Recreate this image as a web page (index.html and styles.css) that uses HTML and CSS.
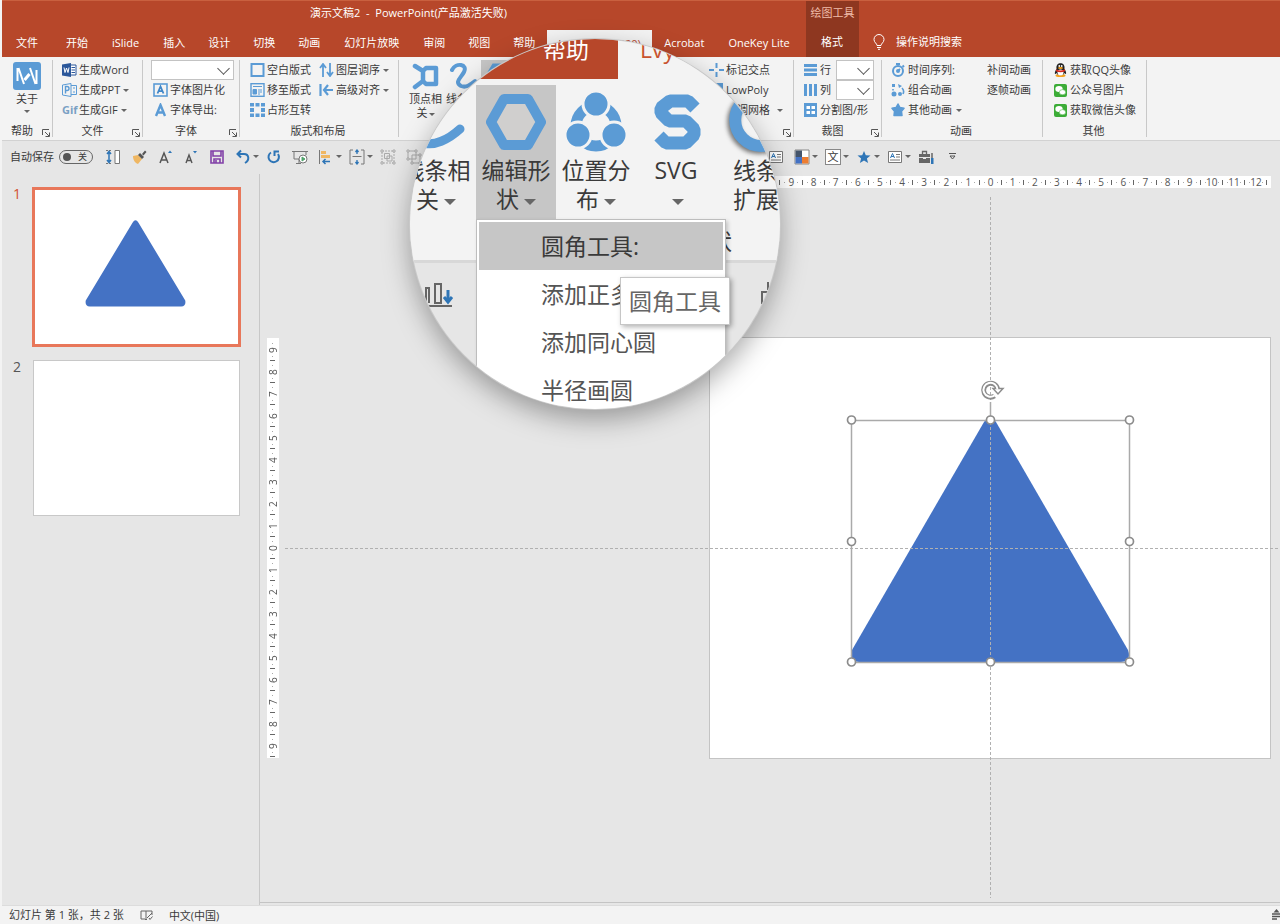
FILE: index.html
```html
<!DOCTYPE html>
<html lang="zh-CN">
<head>
<meta charset="utf-8">
<meta name="viewport" content="width=device-width, initial-scale=1">
<title>演示文稿2 - PowerPoint</title>
<link rel="stylesheet" href="styles.css">
</head>
<body>
<div class="app">
  <header class="header">
    <div class="title">演示文稿2&nbsp; -&nbsp; PowerPoint(产品激活失败)</div>
    <nav class="tabs">
      <button class="tab tab-file">文件</button>
      <button class="tab">开始</button>
      <button class="tab tab-wide">iSlide</button>
      <button class="tab">插入</button>
      <button class="tab">设计</button>
      <button class="tab">切换</button>
      <button class="tab">动画</button>
      <button class="tab tab-wide">幻灯片放映</button>
      <button class="tab">审阅</button>
      <button class="tab">视图</button>
      <button class="tab">帮助</button>
      <button class="tab tab-active">LvyhTools(2420)</button>
      <button class="tab tab-wide">Acrobat</button>
      <button class="tab">OneKey Lite</button>
    </nav>
    <div class="context">
      <span class="context-name">绘图工具</span>
      <button class="tab context-tab">格式</button>
    </div>
    <button class="tell-me">
      <svg width="12" height="16" viewBox="0 0 12 16" fill="none" stroke="#fff"><path d="M4 11.5C4 9.500 1 8.500 1 5.500a5 5 0 0 1 10 0c0 3-3 4-3 6zM4 13.500h4M5 15.300h2"/></svg>
      操作说明搜索
    </button>
  </header>

  <section class="ribbon">
    <div class="group">
      <div class="group-body">
        <button class="big">
          <svg width="28" height="28" viewBox="0 0 28 28"><rect width="28" height="28" rx="3" fill="#5b9bd5"/><path d="M4.500 6v13M5.500 6l5.500 16M17 6l5.500 16M23.500 8v14" fill="none" stroke="#fff" stroke-width="2"/><path d="M11.500 18l5-6" fill="none" stroke="#fff" stroke-width="3"/></svg>
          <span>关于</span><i class="caret"></i>
        </button>
      </div>
      <div class="group-foot"><span>帮助</span><button class="launcher" aria-label="帮助选项"><svg width="8" height="8" viewBox="0 0 8 8"><path d="M.5 6V.5H7M3 3l4 4M7.500 3.500v4h-4" fill="none" stroke="#555"/></svg></button></div>
    </div>

    <div class="group">
      <div class="group-body pad-file">
        <div class="stack">
          <button class="item"><svg width="15" height="14" viewBox="0 0 15 14"><path d="M8 2h6v10H8M9.500 4.500H13M9.500 7H13M9.500 9.500H13" fill="#fff" stroke="#2b579a"/><path d="M0 1.500 9 0v14l-9-1.500z" fill="#2b579a"/><path d="m2 4.500 1 5 1.500-4.500L6 9.500l1-5" fill="none" stroke="#fff"/></svg>生成Word</button>
          <button class="item"><svg width="15" height="14" viewBox="0 0 15 14" fill="none" stroke="#5b9bd5"><path d="M.5 2 9 .5v13L.5 12zM9 2.500h5.500v9H9M11 5h2M11 9h2"/><path d="M3.500 10.500v-7h1.500a2 2 0 0 1 0 4H3.500" stroke-width="1.400"/></svg>生成PPT<i class="caret"></i></button>
          <button class="item"><b class="gif">Gif</b>生成GIF<i class="caret"></i></button>
        </div>
      </div>
      <div class="group-foot"><span>文件</span><button class="launcher" aria-label="文件选项"><svg width="8" height="8" viewBox="0 0 8 8"><path d="M.5 6V.5H7M3 3l4 4M7.500 3.500v4h-4" fill="none" stroke="#555"/></svg></button></div>
    </div>

    <div class="group">
      <div class="group-body pad-font">
        <div class="stack">
          <label class="pick"><select aria-label="字体"><option></option></select></label>
          <button class="item"><svg width="15" height="14" viewBox="0 0 15 14" fill="none" stroke="#5b9bd5"><rect x="1" y="1" width="13" height="12" stroke-width="1.600"/><path d="m4.500 10.500 3-7 3 7M5.500 8.200h4" stroke="#3f86c8" stroke-width="1.800"/></svg>字体图片化</button>
          <button class="item"><svg width="15" height="14" viewBox="0 0 15 14" fill="none" stroke="#5b9bd5" stroke-width="2.400"><path d="m3 13 4.500-11L12 13M4.500 9.500h6"/></svg>字体导出:</button>
        </div>
      </div>
      <div class="group-foot"><span>字体</span><button class="launcher" aria-label="字体选项"><svg width="8" height="8" viewBox="0 0 8 8"><path d="M.5 6V.5H7M3 3l4 4M7.500 3.500v4h-4" fill="none" stroke="#555"/></svg></button></div>
    </div>

    <div class="group">
      <div class="group-body pad-layout">
        <div class="stack">
          <button class="item"><svg width="15" height="14" viewBox="0 0 15 14"><rect x="1.500" y="1" width="12" height="12" fill="none" stroke="#5b9bd5" stroke-width="2"/></svg>空白版式</button>
          <button class="item"><svg width="15" height="14" viewBox="0 0 15 14" fill="none" stroke="#5b9bd5"><rect x="1" y=".7" width="13" height="12.600" stroke-width="1.400"/><path d="M3 3.500h9M8 7h4M8 9h4M8 11h2"/><path d="M3 6.500h3.500V11H3z" fill="#5b9bd5"/></svg>移至版式</button>
          <button class="item"><svg width="15" height="14" viewBox="0 0 15 14" fill="#5b9bd5"><path d="M0 0h4v3.500H0zM5.500 0h4v3.500h-4zM11 0h4v3.500h-4zM0 5h4v4H0zM11 5h4v4h-4zM0 10.500h4V14H0zM5.500 10.500h4V14h-4zM11 10.500h4V14h-4z"/></svg>占形互转</button>
        </div>
        <div class="stack">
          <button class="item"><svg width="15" height="14" viewBox="0 0 15 14" fill="none" stroke="#5b9bd5" stroke-width="1.800"><path d="M4 14V1M1 5l3-4 3 4M11 0v13M8 9l3 4 3-4"/></svg>图层调序<i class="caret"></i></button>
          <button class="item"><svg width="15" height="14" viewBox="0 0 15 14" fill="none" stroke="#5b9bd5" stroke-width="2.200"><path d="M1.500 1v12M14 7H5M9 2 5 7l4 5"/></svg>高级对齐<i class="caret"></i></button>
        </div>
      </div>
      <div class="group-foot"><span>版式和布局</span></div>
    </div>

    <div class="group">
      <div class="group-body pad-shape">
        <button class="big">
          <svg width="28" height="28" viewBox="0 0 28 28" fill="none" stroke="#5b9bd5" stroke-width="4.500" stroke-linecap="round" stroke-linejoin="round"><path d="M3 4l8 5v10l-8 6M11 9l3-3h10v16H14l-3-3"/></svg>
          <span>顶点相<br>关<i class="caret"></i></span>
        </button>
        <button class="big">
          <svg width="28" height="28" viewBox="0 0 28 28" fill="none" stroke="#5b9bd5" stroke-width="4" stroke-linecap="round"><path d="M3 8C7 0 19 2 15 10c-3 6-10 10-3 14 5 2 9-1 14-5"/></svg>
          <span>线条相<br>关<i class="caret"></i></span>
        </button>
        <button class="big big-on">
          <svg width="28" height="28" viewBox="0 0 28 28" fill="none" stroke="#5b9bd5" stroke-width="5"><path d="M8 4h12l6 10-6 10H8L2 14z"/></svg>
          <span>编辑形<br>状<i class="caret"></i></span>
        </button>
        <div class="stack stack-end">
          <button class="item"><svg width="15" height="14" viewBox="0 0 15 14" fill="none" stroke="#5b9bd5" stroke-width="2"><path d="M7.500 0v5M7.500 9v5M0 7h5M10 7h5"/></svg>标记交点</button>
          <button class="item"><svg width="15" height="14" viewBox="0 0 15 14" fill="#5b9bd5"><path d="M2 0h12v14L2 9z"/></svg>LowPoly</button>
          <button class="item"><svg width="15" height="14" viewBox="0 0 15 14" fill="none" stroke="#5b9bd5"><path d="M1 1h13v12H1zM5 1v12M10 1v12M1 5h13M1 9h13"/></svg>微调网格<i class="caret caret-far"></i></button>
        </div>
      </div>
      <div class="group-foot"><span>形状</span><button class="launcher" aria-label="形状选项"><svg width="8" height="8" viewBox="0 0 8 8"><path d="M.5 6V.5H7M3 3l4 4M7.500 3.500v4h-4" fill="none" stroke="#555"/></svg></button></div>
    </div>

    <div class="group">
      <div class="group-body pad-crop">
        <div class="stack">
          <label class="item"><svg width="13" height="14" viewBox="0 0 13 14" fill="#5b9bd5"><path d="M0 1h13v3H0zM0 5.500h13v3H0zM0 10h13v3H0z"/></svg><span>行</span><span class="pick pick-small"><select><option></option></select></span></label>
          <label class="item"><svg width="13" height="14" viewBox="0 0 13 14" fill="#5b9bd5"><path d="M0 1h3v12H0zM5 1h3v12H5zM10 1h3v12h-3z"/></svg><span>列</span><span class="pick pick-small"><select><option></option></select></span></label>
          <button class="item"><svg width="13" height="14" viewBox="0 0 13 14"><path fill="#5b9bd5" d="M0 0h13v14H0z"/><path fill="#fff" d="M2.500 3H6v3H2.500zM7.500 3H11v3H7.500zM2.500 8H6v3H2.500zM7.500 8H11v3H7.500z"/></svg>分割图/形</button>
        </div>
      </div>
      <div class="group-foot"><span>裁图</span><button class="launcher" aria-label="裁图选项"><svg width="8" height="8" viewBox="0 0 8 8"><path d="M.5 6V.5H7M3 3l4 4M7.500 3.500v4h-4" fill="none" stroke="#555"/></svg></button></div>
    </div>

    <div class="group">
      <div class="group-body pad-anim">
        <div class="stack">
          <button class="item"><svg width="14" height="14" viewBox="0 0 14 14" fill="none" stroke="#5b9bd5" stroke-width="2"><circle cx="7" cy="8" r="5"/><path d="M5 1h4M11.500 2.500l1.500 1.500"/><path d="M7 8l2-2"/><circle cx="7" cy="8" r="1"/></svg>时间序列:</button>
          <button class="item"><svg width="14" height="14" viewBox="0 0 14 14" fill="#5b9bd5"><path d="M1 1h3v3H1zM7 1l4 2-3 2z"/><circle cx="3" cy="11" r="2.500"/><circle cx="9" cy="11" r="2"/><path d="M11 5c2 2 2 4 1 6M2 6v1.500" fill="none" stroke="#5b9bd5" stroke-width="1.600"/></svg>组合动画</button>
          <button class="item"><svg width="14" height="14" viewBox="0 0 14 14"><path fill="#5b9bd5" stroke="#5b9bd5" stroke-width="1.500" stroke-linejoin="round" d="m7 1 2 3.500 4 .8-2.500 3 .5 4.200H3l.5-4.200L1 5.300l4-.8z"/></svg>其他动画<i class="caret"></i></button>
        </div>
        <div class="stack stack-frames">
          <button class="item">补间动画</button>
          <button class="item">逐帧动画</button>
        </div>
      </div>
      <div class="group-foot"><span>动画</span></div>
    </div>

    <div class="group">
      <div class="group-body pad-other">
        <div class="stack">
          <button class="item"><svg width="13" height="14" viewBox="0 0 13 14"><ellipse cx="6.500" cy="12.500" rx="5" ry="1.500" fill="#f5a21d"/><path d="M2.500 6C2 2 4 .3 6.500.3S11 2 10.500 6c2 3 2 5 1 5l-1-1c-1 3-7 3-8 0l-1 1c-1 0-1-2 1-5z" fill="#222"/><ellipse cx="6.500" cy="9.500" rx="3" ry="3" fill="#fff"/><path d="M2 6.200c3 1.800 6 1.800 9 0v2c-3 1.500-6 1.500-9 0z" fill="#d8281f"/><ellipse cx="6.500" cy="5" rx="2.500" ry=".9" fill="#f5a21d"/><circle cx="5.300" cy="3" r=".9" fill="#fff"/><circle cx="7.700" cy="3" r=".9" fill="#fff"/></svg>获取QQ头像</button>
          <button class="item"><svg width="13" height="13" viewBox="0 0 13 13"><rect width="13" height="13" rx="2" fill="#3cac37"/><ellipse cx="5" cy="5" rx="3.700" ry="3" fill="#fff"/><ellipse cx="8.500" cy="8.200" rx="3.200" ry="2.600" fill="#fff" stroke="#3cac37" stroke-width=".5"/></svg>公众号图片</button>
          <button class="item"><svg width="13" height="13" viewBox="0 0 13 13"><rect width="13" height="13" rx="2" fill="#3cac37"/><ellipse cx="5" cy="5" rx="3.700" ry="3" fill="#fff"/><ellipse cx="8.500" cy="8.200" rx="3.200" ry="2.600" fill="#fff" stroke="#3cac37" stroke-width=".5"/></svg>获取微信头像</button>
        </div>
      </div>
      <div class="group-foot"><span>其他</span></div>
    </div>
  </section>

  <section class="quick">
    <div class="quick-main">
      <label class="autosave">自动保存<span class="switch"><input type="checkbox" role="switch"><span>关</span></span></label>
      <button class="tool" aria-label="行距"><svg width="16" height="16" viewBox="0 0 16 16" fill="none" stroke="#777"><path d="M10 1.500h4.500v13H10z" fill="#fff"/><path d="M1 1.500h6M1 14.500h6" stroke-dasharray="2 1"/><path d="M4 3v10M2 5l2-2.500L6 5M2 11l2 2.500L6 11" stroke="#2e75b6" stroke-width="1.500"/></svg></button>
      <button class="tool" aria-label="格式刷"><svg width="16" height="16" viewBox="0 0 16 16"><path d="M2 7l5-1 4 4-4 5c-3-1-5-4-5-8z" fill="#efb763"/><path d="M7 6l2-2 4 4-2 2zM11 5l3-3.500 1.500 1.500L12.500 6.500z" fill="#555"/></svg></button>
      <button class="tool" aria-label="增大字号"><svg width="16" height="16" viewBox="0 0 16 16" fill="none" stroke="#555" stroke-width="1.500"><path d="M3 14l4-10 4 10M4.500 11h5"/><path d="M11 4l2-2.500L15 4z" fill="#2e75b6" stroke="none"/></svg></button>
      <button class="tool" aria-label="减小字号"><svg width="16" height="16" viewBox="0 0 16 16" fill="none" stroke="#555" stroke-width="1.400"><path d="M3 14l3-8 3 8M4 11.500h4"/><path d="M10 2h4l-2 2.500z" fill="#2e75b6" stroke="none"/></svg></button>
      <button class="tool" aria-label="保存"><svg width="16" height="16" viewBox="0 0 16 16" fill="none" stroke="#8241a8" stroke-width="1.600"><path d="M2 2h12v12H2zM4 2v5h8V2M5 14v-4h6v4M7 11v3"/></svg></button>
      <button class="tool tool-menu" aria-label="撤消"><svg width="16" height="16" viewBox="0 0 16 16" fill="none" stroke="#2e75b6" stroke-width="2"><path d="M6 1.500 2.500 5 6 8.500M3 5h6c5 0 6 6 1 9"/></svg><i class="caret"></i></button>
      <button class="tool" aria-label="恢复"><svg width="16" height="16" viewBox="0 0 16 16" fill="none" stroke="#2e75b6" stroke-width="2"><path d="M5 3.500a5.200 5.200 0 1 0 7 1.500M8.500 7V2.500H13"/></svg></button>
      <button class="tool" aria-label="放映"><svg width="16" height="16" viewBox="0 0 16 16" fill="none" stroke="#777"><path d="M0 2.500h16M2 3v7h5M14 3v3M7 10v4M4 14.500h5"/><circle cx="11" cy="10" r="4" fill="#fff"/><path d="M10 8l3 2-3 2z" fill="#4fa36b" stroke="#4fa36b"/></svg></button>
      <button class="tool tool-menu" aria-label="对齐"><svg width="16" height="16" viewBox="0 0 16 16"><path d="M1.500 1v14" stroke="#777"/><path d="M3 2h5v3H3zM3 6h9v3H3z" fill="#efb763"/><path d="M12 12.500H5M7.500 10 5 12.500 7.500 15" fill="none" stroke="#2e75b6" stroke-width="1.500"/></svg><i class="caret"></i></button>
      <button class="tool tool-menu" aria-label="分布"><svg width="16" height="16" viewBox="0 0 16 16" fill="none" stroke="#777"><path d="M4 1H1v14h3M12 1h3v14h-3M3.500 7.500h9"/><path d="M8 1v4M6.500 3 8 1l1.500 2M8 15v-4M6.500 13 8 15l1.500-2" stroke="#2e75b6" stroke-width="1.300"/></svg><i class="caret"></i></button>
      <button class="tool" aria-label="组合"><svg width="16" height="16" viewBox="0 0 16 16" fill="none" stroke="#aaa"><path d="M2 2h12v12H2z" stroke-dasharray="2 1"/><path d="M4.500 4.500h5v5h-5zM7 7h5v5H7z"/><path d="M1 1h2v2H1zM13 1h2v2h-2zM1 13h2v2H1zM13 13h2v2h-2z" fill="#eee"/></svg></button>
      <button class="tool" aria-label="取消组合"><svg width="16" height="16" viewBox="0 0 16 16" fill="none" stroke="#aaa"><path d="M2 2h8v8H2zM6 6h8v8H6z" fill="#e6e6e6"/><path d="M1 1h2v2H1zM9 1h2v2H9zM1 9h2v2H1zM13 5h2v2h-2zM5 13h2v2H5zM13 13h2v2h-2z" fill="#eee"/></svg></button>
    </div>
    <div class="quick-more">
      <button class="tool" aria-label="文本框"><svg width="16" height="16" viewBox="0 0 16 16" fill="none" stroke="#777"><path d="M1.500 2.500h13v11h-13z" fill="#fff"/><path d="M9 5.500h4M9 8h4M3 11h10"/><path d="M3.500 9 5.500 4.500 7.500 9M4 7.500h3" stroke="#2e75b6"/></svg></button>
      <button class="tool tool-menu" aria-label="主题颜色"><svg width="16" height="16" viewBox="0 0 16 16"><path d="M1 1h14v14H1z" fill="#fff" stroke="#888"/><path d="M1.500 1.500H8V8H1.500z" fill="#44546a"/><path d="M1.500 8H8v6.500H1.500z" fill="#4472c4"/><path d="M8 8h6.500v6.500H8z" fill="#ed7d31"/></svg><i class="caret"></i></button>
      <button class="tool tool-menu" aria-label="字体"><span class="glyph">文</span><i class="caret"></i></button>
      <button class="tool tool-menu" aria-label="动画效果"><svg width="16" height="16" viewBox="0 0 16 16"><path fill="#2e75b6" d="m8 2 1.800 4.200 4.700.3-3.600 3 1.200 4.500L8 11.500 3.900 14l1.200-4.500-3.600-3 4.700-.3z"/></svg><i class="caret"></i></button>
      <button class="tool tool-menu" aria-label="版式"><svg width="16" height="16" viewBox="0 0 16 16" fill="none" stroke="#777"><path d="M1.500 2.500h13v11h-13z" fill="#fff"/><path d="M9 5.500h4M9 8h4M3 11h10"/><path d="M3.500 9 5.500 4.500 7.500 9M4 7.500h3" stroke="#2e75b6"/></svg><i class="caret"></i></button>
      <button class="tool" aria-label="工具箱"><svg width="16" height="16" viewBox="0 0 16 16"><path d="M1 5h11v3H1zM1 9h11v5H1z" fill="#666"/><path d="M4.500 5V2.500h4V5" fill="none" stroke="#666" stroke-width="1.300"/><path d="M5 8h3v2H5z" fill="#e6e6e6"/><path d="M14 4v5" stroke="#666" stroke-width="1.500"/><path d="M13 9h2.500v6H13z" fill="#2e75b6"/></svg></button>
      <button class="tool" aria-label="自定义快速访问工具栏"><svg width="16" height="16" viewBox="0 0 16 16" fill="none" stroke="#555"><path d="M5 4.500h7M6 7h5l-2.500 3z"/></svg></button>
    </div>
  </section>

  <main class="work">
    <aside class="pane">
      <div class="thumb-row"><span class="num num-on">1</span>
        <button class="thumb thumb-on" aria-label="幻灯片 1"><svg viewBox="0 0 204 153"><path fill="#4472c4" d="M98 32Q101 27 104 32L151 110Q152 116 147 116H55Q50 116 51 110Z"/></svg></button></div>
      <div class="thumb-row"><span class="num">2</span>
        <button class="thumb" aria-label="幻灯片 2"></button></div>
    </aside>
    <section class="stage">
      <div class="ruler ruler-x">
        <i>12</i><i>11</i><i>10</i><i>9</i><i>8</i><i>7</i><i>6</i><i>5</i><i>4</i><i>3</i><i>2</i><i>1</i><i>0</i><i>1</i><i>2</i><i>3</i><i>4</i><i>5</i><i>6</i><i>7</i><i>8</i><i>9</i><i>10</i><i>11</i><i>12</i>
      </div>
      <div class="ruler ruler-y">
        <i>9</i><i>8</i><i>7</i><i>6</i><i>5</i><i>4</i><i>3</i><i>2</i><i>1</i><i>0</i><i>1</i><i>2</i><i>3</i><i>4</i><i>5</i><i>6</i><i>7</i><i>8</i><i>9</i>
      </div>
      <div class="slide">
        <svg class="shape" viewBox="0 0 298 292" width="298" height="292">
          <path fill="#4472c4" d="M143 52Q149 43 155 52L287 280Q291 291 280 292H18Q7 291 11 280Z"/>
        </svg>
        <div class="guide guide-x"></div>
        <div class="guide guide-y"></div>
        <svg class="shape" viewBox="0 0 298 302" width="298" height="302" fill="none">
          <path d="M149.500 32v18M10.500 50.500h278v242h-278z" stroke="#aaa" stroke-width="1.500"/>
          <g fill="#fff" stroke="#8c8c8c" stroke-width="1.700">
            <circle cx="10.500" cy="50" r="4"/><circle cx="149.500" cy="50" r="4"/><circle cx="288.500" cy="50" r="4"/>
            <circle cx="10.500" cy="171.500" r="4"/><circle cx="288.500" cy="171.500" r="4"/>
            <circle cx="10.500" cy="292" r="4"/><circle cx="149.500" cy="292" r="4"/><circle cx="288.500" cy="292" r="4"/>
          </g>
          <path d="M153.500 26a7 7 0 1 1 3-7" stroke="#8c8c8c" stroke-width="5"/>
          <path d="M152 18.500h10l-5 5.500z" fill="#fff" stroke="#8c8c8c" stroke-width="1.500"/>
          <path d="M153.500 25.500a7 7 0 1 1 3-6" stroke="#fff" stroke-width="2"/>
        </svg>
      </div>
    </section>
  </main>

  <footer class="status">
    <span>幻灯片 第 1 张，共 2 张</span>
    <button class="status-item" aria-label="拼写检查"><svg width="13" height="12" viewBox="0 0 13 12" fill="none" stroke="#666"><path d="M6 2H1v8h4l1 1 1-1M6 2v8M6 2h6v4M7 9l5-5M9 9l1 1.500 2.500-3"/></svg></button>
    <button class="status-item">中文(中国)</button>
    <button class="status-item status-notes" aria-label="备注"><svg width="9" height="12" viewBox="0 0 9 12"><path d="M2.500 3.500 5.500 0l3 3.500z" fill="#555"/><path d="M1 5h8M1 7.500h8M1 10h5" stroke="#555" stroke-width="1.300"/></svg></button>
  </footer>

  <div class="lens">
    <div class="lens-tabs"><div class="lens-red">帮助</div><div class="lens-active">LvyhTools</div></div>
    <div class="lens-ribbon">
      <div class="lens-row">
        <button class="zoomed"><svg width="60" height="60" viewBox="0 0 60 60" fill="none" stroke="#5b9bd5" stroke-width="9" stroke-linecap="round"><path d="M6 16C14-2 40 4 32 20 26 33 4 46 18 51c10 3 24-3 36-14"/></svg><span>线条相<br>关<i class="caret-big"></i></span></button>
        <button class="zoomed zoomed-on"><svg width="60" height="60" viewBox="0 0 60 60"><path d="M18 7h24l13 23-13 23H18L5 30z" fill="#d0cfce" stroke="#5b9bd5" stroke-width="10" stroke-linejoin="round"/></svg><span>编辑形<br>状<i class="caret-big"></i></span></button>
        <button class="zoomed"><svg width="60" height="60" viewBox="0 0 60 60"><circle cx="30" cy="34" r="20" fill="none" stroke="#5b9bd5" stroke-width="11"/><g fill="#5b9bd5" stroke="#f3f3f3" stroke-width="3"><circle cx="30" cy="12" r="13"/><circle cx="12" cy="43" r="13"/><circle cx="48" cy="43" r="13"/></g></svg><span>位置分<br>布<i class="caret-big"></i></span></button>
        <button class="zoomed"><svg width="60" height="60" viewBox="0 0 60 60" fill="none" stroke="#5b9bd5" stroke-width="13" stroke-linejoin="bevel"><path d="M49 16 42 9H24l-9 7v5l8 8h17l8 8v6l-8 8H20l-7-7"/></svg><span>SVG<br><i class="caret-big"></i></span></button>
        <button class="zoomed"><svg class="ring" width="60" height="60" viewBox="0 0 60 60" fill="none" stroke="#5b9bd5" stroke-width="12"><path d="M54 10A26 26 0 1 0 54 46"/></svg><span>线条<br>扩展</span></button>
      </div>
      <div class="lens-foot">形状</div>
    </div>
    <div class="lens-quick">
      <svg width="30" height="26" viewBox="0 0 30 26" fill="none" stroke="#666" stroke-width="2"><path d="M2 21V6h3v15M11 21V2h6v19zM0 24h28"/><path d="M24 8v11M20 15l4 5 4-5" stroke="#2e75b6" stroke-width="3"/></svg>
      <svg width="20" height="26" viewBox="0 0 20 26" fill="none" stroke="#666" stroke-width="2"><path d="M8 0v8M2 22V10h14v12"/></svg>
    </div>
    <div class="menu">
      <button class="menu-item menu-on">圆角工具:</button>
      <button class="menu-item">添加正多边形</button>
      <button class="menu-item">添加同心圆</button>
      <button class="menu-item">半径画圆</button>
    </div>
    <div class="tip" role="tooltip">圆角工具</div>
  </div>
</div>
</body>
</html>
```

FILE: styles.css
```css
* { box-sizing: border-box; }
body {
  margin: 0;
  background: #f3f3f3;
  color: #3a3a3a;
  font: 11px/20px "Open Sans", "Noto Sans CJK SC", sans-serif;
}
button, select {
  margin: 0;
  padding: 0;
  border: 0;
  background: none;
  color: inherit;
  font: inherit;
  white-space: nowrap;
}
i { font-style: normal; }
svg { display: block; flex: none; }

.app {
  position: relative;
  display: flex;
  flex-direction: column;
  min-height: 100vh;
  padding-left: 2px;
  overflow: hidden;
}

/* title bar and tabs */
.header {
  display: grid;
  grid-template: 28px 28px / 804px 53px 1fr;
  border-top: 1px solid #c9603f;
  background: #b7472a;
  color: #fff;
}
.title { padding-left: 9px; text-align: center; line-height: 24px; }
.tabs { display: flex; grid-row: 2; }
.tab { padding: 0 12px 0 11px; line-height: 26px; }
.tab-file { padding: 0 17px 0 14px; }
.tab-wide { padding: 0 13px 0 12px; }
.tab-active {
  width: 105px;
  margin-top: 1px;
  background: #f3f3f3;
  color: #b7472a;
  text-align: right;
}
.context {
  display: flex;
  flex-direction: column;
  grid-area: 1 / 2 / 3 / 3;
  background: #8e3720;
  text-align: center;
}
.context-name { height: 28px; color: #f0bca9; line-height: 24px; }
.tell-me {
  display: flex;
  grid-area: 2 / 3;
  gap: 11px;
  align-items: center;
  padding: 0 0 2px 14px;
}

/* ribbon */
.ribbon {
  display: grid;
  grid-template-columns: 51px 90px 97px 159px 395px 88px 161px 104px 1fr;
  padding: 3px 0;
  border-bottom: 1px solid #d2d2d2;
}
.group { border-right: 1px solid #c8c8c8; }
.group-body { display: flex; height: 62px; }
.group-foot { display: flex; height: 15px; padding-right: 2px; line-height: 18px; }
.group-foot span { flex: 1; text-align: center; }
.launcher { display: flex; align-items: flex-end; width: 8px; height: 15px; }
.stack { display: flex; flex-direction: column; }
.item { display: flex; align-items: center; gap: 2px; height: 20px; line-height: 20px; }
.gif { width: 15px; color: #7aa0c4; }
.pad-file { padding-left: 9px; }
.pad-font { padding-left: 8px; }
.pad-font .item { padding-left: 2px; }
.pad-layout { gap: 8px; padding-left: 10px; }
.pad-shape { padding-left: 8px; }
.pad-crop { padding-left: 10px; }
.pad-anim { padding-left: 9px; }
.pad-other { padding-left: 11px; }
.pad-other .item, .pad-anim .item, .pad-crop .item { gap: 3px; }
.stack-frames { margin-left: 25px; }
.stack-end { margin: 0 10px 0 auto; }
.caret {
  display: inline-block;
  flex: none;
  margin-left: 1px;
  border: 3px solid transparent;
  border-top-color: #666;
  border-bottom: 0;
  vertical-align: middle;
}
.caret-far { margin-left: 5px; }
.big {
  display: flex;
  flex-direction: column;
  align-items: center;
  width: 37px;
  padding-top: 2px;
  line-height: 14px;
}
.big span { margin-top: 2px; }
.group:first-child .big { width: 50px; }
.group:first-child .caret { margin: 4px 0 0; }
.big-on { width: 38px; background: #c6c6c6; }

.pick { position: relative; display: block; width: 83px; height: 20px; border: 1px solid #c3c3c3; background: #fff; }
.pick select { display: block; width: 100%; height: 18px; appearance: none; }
.pick::after {
  content: "";
  position: absolute;
  top: 3px;
  right: 5px;
  width: 8px;
  height: 8px;
  border: solid #555;
  border-width: 0 1px 1px 0;
  transform: rotate(45deg);
  pointer-events: none;
}
.pick-small { width: 38px; margin-left: 2px; }

/* quick access bar */
.quick { display: flex; height: 33px; padding-bottom: 2px; background: #e6e6e6; }
.quick-main { display: flex; flex: 0 0 766px; gap: 10px; align-items: center; padding-left: 8px; }
.quick-more { display: flex; gap: 10px; align-items: center; }
.autosave { display: flex; gap: 5px; align-items: center; margin-right: 2px; }
.switch {
  position: relative;
  display: flex;
  justify-content: flex-end;
  width: 34px;
  height: 14px;
  padding-right: 5px;
  border: 1px solid #666;
  border-radius: 7px;
  font-size: 9px;
  line-height: 12px;
}
.switch input {
  position: absolute;
  top: 2px;
  left: 3px;
  width: 8px;
  height: 8px;
  margin: 0;
  border-radius: 50%;
  background: #555;
  appearance: none;
}
.tool { display: flex; align-items: center; height: 20px; }
.tool-menu { margin-right: -3px; }
.tool-menu .caret { margin-left: 2px; }
.glyph { width: 16px; height: 16px; border: 1px solid #888; background: #fff; line-height: 14px; text-align: center; }

/* work area */
.work { display: grid; flex: 1; grid-template-columns: 258px 1fr; background: #e6e6e6; }
.pane { padding: 13px 18px 0 11px; border-right: 1px solid #c8c8c8; }
.thumb-row { display: flex; gap: 10px; margin-bottom: 13px; }
.num { width: 9px; color: #555; font-size: 14px; line-height: 14px; }
.num-on { color: #d2502f; }
.thumb { flex: 1; height: 156px; margin: 0 1px; border: 1px solid #c8c8c8; background: #fff; }
.thumb-on { height: 160px; margin: 0; border: 3px solid #e8775a; }
.thumb svg { width: 100%; }

.stage {
  display: grid;
  grid-template: 12px 149px auto 1fr / 12px 1fr 562px;
  margin-bottom: 2px;
  padding: 2px 9px 0 7px;
  border-bottom: 1px solid #c4c4c4;
}
.ruler { display: flex; background: #fff; color: #555; font-size: 10px; line-height: 12px; }
.ruler i {
  flex: 1;
  text-align: center;
  background:
    linear-gradient(#666, #666) right center / 1px 5px no-repeat,
    linear-gradient(#aaa, #aaa) 4px center / 1px 1px no-repeat,
    linear-gradient(#aaa, #aaa) 17px center / 1px 1px no-repeat;
}
.ruler-x { grid-area: 1 / 3; padding: 0 4px 0 5px; }
.ruler-y { grid-area: 3 / 1; height: 420px; margin-top: 1px; padding: 1px 0; writing-mode: vertical-rl; transform: rotate(180deg); }
.ruler-y i {
  background:
    linear-gradient(#666, #666) center top / 5px 1px no-repeat,
    linear-gradient(#aaa, #aaa) center 4px / 1px 1px no-repeat,
    linear-gradient(#aaa, #aaa) center 17px / 1px 1px no-repeat;
}
.slide { position: relative; grid-area: 3 / 3; height: 422px; border: 1px solid #c4c4c4; background: #fff; }
.shape { position: absolute; top: 32px; left: 131px; }
.guide { position: absolute; }
.guide-x {
  top: 210px;
  right: -10px;
  left: -425px;
  height: 1px;
  background: repeating-linear-gradient(90deg, #b0b0b0 0 3px, transparent 3px 5px);
}
.guide-y {
  top: -141px;
  bottom: -140px;
  left: 280px;
  width: 1px;
  background: repeating-linear-gradient(#b0b0b0 0 3px, transparent 3px 5px);
}

.status { display: flex; gap: 16px; height: 19px; padding: 0 0 0 7px; border-top: 1px solid #dcdcdc; line-height: 17px; }
.status-item { display: flex; align-items: center; }
.status-notes { margin-left: auto; }

/* magnifier */
.lens {
  position: absolute;
  top: 39px;
  left: 410px;
  width: 370px;
  height: 370px;
  overflow: hidden;
  border-radius: 50%;
  background: #e6e6e6;
  box-shadow: 0 0 0 1px #c9c9c9, 0 10px 28px rgba(0, 0, 0, .35);
  font-size: 23px;
  line-height: 29px;
}
.lens-tabs { display: flex; height: 40px; line-height: 20px; }
.lens-red { width: 208px; padding-left: 133px; background: #b7472a; color: #fff; }
.lens-active { flex: 1; padding-left: 22px; background: #f3f3f3; color: #c8532f; }
.lens-ribbon { height: 184px; padding-top: 6px; border-bottom: 3px solid #d8d8d8; background: #f3f3f3; }
.lens-row { display: flex; width: 400px; margin-left: -14px; }
.zoomed {
  display: flex;
  flex: 0 0 80px;
  flex-direction: column;
  gap: 4px;
  align-items: center;
  height: 134px;
  padding-top: 7px;
}
.zoomed-on { background: #c6c6c6; }
.caret-big {
  display: inline-block;
  margin-left: 5px;
  border: 6px solid transparent;
  border-top-color: #666;
  border-bottom: 0;
  vertical-align: middle;
}
.ring { filter: drop-shadow(-2px 2px 2px #777); }
.lens-foot { padding-right: 48px; text-align: right; line-height: 44px; }
.lens-quick { display: flex; justify-content: space-between; padding: 19px 0 0 14px; }
.menu {
  position: absolute;
  top: 180px;
  left: 66px;
  width: 250px;
  padding: 2px;
  border: 1px solid #bdbdbd;
  background: #fff;
  box-shadow: 2px 2px 4px rgba(0, 0, 0, .2);
}
.menu-item { display: block; width: 100%; height: 48px; padding-left: 62px; color: #555; text-align: left; line-height: 47px; }
.menu-on { background: #c6c6c6; color: #3a3a3a; }
.tip {
  position: absolute;
  top: 238px;
  left: 210px;
  padding: 0 8px;
  border: 1px solid #c6c6c6;
  background: #fff;
  box-shadow: 2px 2px 5px rgba(0, 0, 0, .3);
  color: #666;
  line-height: 46px;
}
```
